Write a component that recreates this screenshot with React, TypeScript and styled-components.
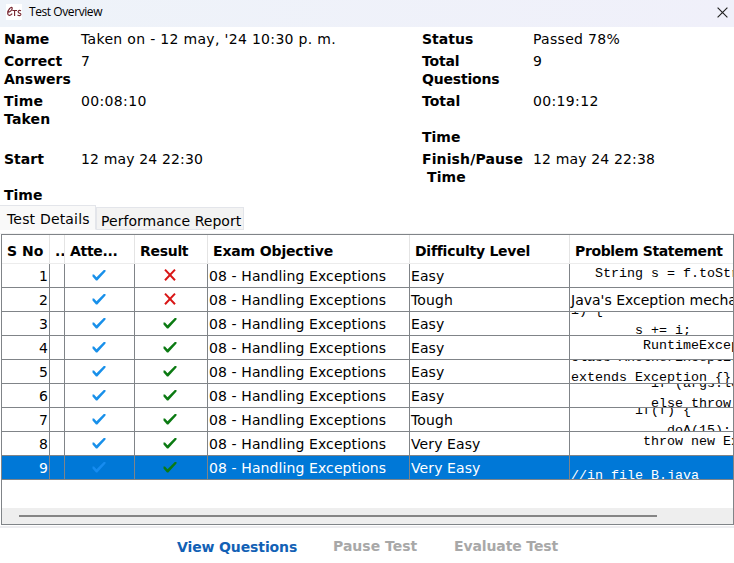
import React from 'react';
import styled, { createGlobalStyle } from 'styled-components';

const Global = createGlobalStyle`
  * { box-sizing: border-box; }
  body { margin: 0; overflow: hidden; background: #fff; }
`;

const Window = styled.div`
  width: 734px;
  height: 563px;
  display: flex;
  flex-direction: column;
  background: #fff;
  color: #000;
  font: 14px/18px 'DejaVu Sans', Verdana, sans-serif;
  overflow: hidden;
`;
const TitleBar = styled.header`
  height: 27px;
  flex: none;
  display: flex;
  align-items: center;
  padding: 0 6px 3px 6px;
  background: linear-gradient(90deg, #eef3f9, #f0f0fa);
`;
const Title = styled.span`
  flex: 1;
  margin-left: 7px;
  font: 12px/16px 'Open Sans', 'Noto Sans', sans-serif;
  letter-spacing: -0.42px;
`;
const Text = styled.span<{ $track?: number }>`
  letter-spacing: ${(p) => p.$track ?? 0}px;
  white-space: pre;
`;
const Info = styled.section`
  flex: none;
  display: grid;
  grid-template-columns: 77px 341px 111px 1fr;
  grid-template-rows: 18px 36px 54px 54px;
  row-gap: 4px;
  height: 179px;
  padding: 3px 0 0 4px;
`;
const Label = styled(Text)`
  font-weight: bold;
`;
const Tabs = styled.nav`
  flex: none;
  height: 28px;
  display: flex;
  align-items: flex-end;
  padding-bottom: 3px;
  border-bottom: 1px solid #f3f3f3;
`;
const Tab = styled.div<{ $active?: boolean; $w: number }>`
  width: ${(p) => p.$w}px;
  height: ${(p) => (p.$active ? 25 : 23)}px;
  padding: ${(p) => (p.$active ? '4px 0 0 7px' : '4px 0 0 4px')};
  background: ${(p) => (p.$active ? '#f9f9f9' : '#f3f3f3')};
  border: 1px solid #e3e5ea;
  border-bottom-color: ${(p) => (p.$active ? '#f9f9f9' : '#e3e5ea')};
  border-left-width: ${(p) => (p.$active ? 0 : 1)}px;
`;
const TablePane = styled.main`
  flex: none;
  width: 733px;
  height: 291px;
  margin-left: 1px;
  border: 1px solid #808488;
  display: flex;
  flex-direction: column;
`;
const columns = '48px 15px 70px 73px 202px 160px 1fr';
const HeaderRow = styled.div`
  flex: none;
  height: 29px;
  display: grid;
  grid-template-columns: ${columns};
  border-bottom: 1px solid #ececec;
`;
const HeadCell = styled.div`
  padding: 7px 0 0 5px;
  border-right: 1px solid #e4e4e4;
  font-weight: bold;
  overflow: hidden;
  &:last-child { border-right: 0; }
`;
const Row = styled.div<{ $selected?: boolean }>`
  flex: none;
  height: 24px;
  display: grid;
  grid-template-columns: ${columns};
  color: ${(p) => (p.$selected ? '#fff' : '#000')};
  background: ${(p) => (p.$selected ? '#0078d7' : '#fff')};
`;
const Cell = styled.div<{ $align?: string }>`
  height: 24px;
  padding: 3px 1px 0;
  text-align: ${(p) => p.$align ?? 'left'};
  border-right: 1px solid #808488;
  border-bottom: 1px solid #808488;
  overflow: hidden;
  &:last-child { border-right: 0; }
`;
const IconCell = styled(Cell)`
  padding: 3px 2px 0 0;
  display: flex;
  justify-content: center;
`;
const CodeCell = styled(Cell)`
  padding: 0 0 0 1px;
`;
const Code = styled.pre<{ $shift: number }>`
  margin: ${(p) => p.$shift}px 0 0;
  font: 13.333px/20px 'Liberation Mono', 'Courier New', monospace;
`;
const ScrollTrack = styled.div`
  margin-top: auto;
  height: 16px;
  padding: 7px 76px 0 17px;
  background: #eee;
`;
const ScrollThumb = styled.div`
  height: 2px;
  background: #858585;
`;
const Footer = styled.footer`
  flex: 1;
  margin-top: 1px;
  border-top: 2px solid #ededf0;
  padding: 9px 0 0 177px;
  display: flex;
  font-weight: bold;
`;
const Action = styled.button<{ $w: number; $primary?: boolean }>`
  width: ${(p) => p.$w}px;
  height: 18px;
  padding: 0;
  border: 0;
  background: none;
  text-align: left;
  font: inherit;
  margin-top: ${(p) => (p.$primary ? 1 : 0)}px;
  color: ${(p) => (p.$primary ? '#1261b5' : '#a8a8a8')};
`;

const Logo = () => (
  <svg width="16" height="16" viewBox="0 0 16 16" fill="none" stroke="#74222c">
    <rect width="16" height="16" fill="#fff" stroke="none" />
    <path d="M1.2 8.3C4 8.4 6.6 5.8 6.2 3.9C5.3 2 1.6 6.2 1.7 9.2C1.8 12.3 4.3 11.7 6.2 9.6" strokeWidth="1.2" />
    <path d="M6.3 6.5H11M8.6 6.5V12M15 6.8C12.7 5.7 11.2 7.3 12.7 8.7C14 9.6 15.4 9.7 14.7 11C14 11.8 12.6 11.7 11.5 11" strokeWidth="1.1" />
  </svg>
);
const Close = () => (
  <svg width="11" height="11" viewBox="0 0 11 11" stroke="#222" strokeWidth="1.15">
    <path d="M.6.6L10.4 10.4M10.4.6L.6 10.4" />
  </svg>
);
const Check = ({ color }: { color: string }) => (
  <svg width="14" height="16" viewBox="0 0 14 16" fill={color}>
    <path d="M0.5 7.5H2L4.5 10.2L11.8 3H13.5V4.5L5.3 13.5H4L0.5 9.5Z" />
  </svg>
);
const Cross = () => (
  <svg width="12" height="16" viewBox="0 0 12 16" fill="none" stroke="#d91616" strokeWidth="2">
    <path d="M1 2.6L11 13.2M11 2.6L1 13.2" />
  </svg>
);

type Entry = { level: string; failed?: boolean; code?: string; shift?: number; text?: string };
const entries: Entry[] = [
  { level: 'Easy', failed: true, code: '   String s = f.toString();', shift: 0 },
  { level: 'Tough', failed: true, text: "Java's Exception mechanism" },
  { level: 'Easy', code: 'i) {\n        s += i;', shift: -11 },
  { level: 'Easy', code: '         RuntimeException', shift: 0 },
  { level: 'Easy', code: 'class AnotherException\nextends Exception {}', shift: -12 },
  { level: 'Easy', code: '          if (args.length\n          else throw', shift: -10 },
  { level: 'Tough', code: '        if(f) {\n            doA(15);', shift: -7 },
  { level: 'Very Easy', code: '         throw new Exception', shift: 0 },
  { level: 'Very Easy', code: '//in file B.java', shift: 10 },
];

export default function App() {
  return (
    <>
      <Global />
      <Window>
        <TitleBar>
          <Logo />
          <Title>Test Overview</Title>
          <Close />
        </TitleBar>
        <Info>
          <Label>Name</Label>
          <Text $track={0.32}>Taken on - 12 may, '24 10:30 p. m.</Text>
          <Label>Status</Label>
          <Text $track={0.3}>Passed 78%</Text>
          <Label>{'Correct\nAnswers'}</Label>
          <Text>7</Text>
          <Label $track={-0.2}>{'Total\nQuestions'}</Label>
          <Text>9</Text>
          <Label $track={0.15}>{'Time\nTaken'}</Label>
          <Text $track={0.35}>00:08:10</Text>
          <Label>{'Total\n\nTime'}</Label>
          <Text $track={0.35}>00:19:12</Text>
          <Label>{'Start\n\nTime'}</Label>
          <Text $track={0.15}>12 may 24 22:30</Text>
          <Label $track={0.12}>{'Finish/Pause\n Time'}</Label>
          <Text $track={0.15}>12 may 24 22:38</Text>
        </Info>
        <Tabs>
          <Tab $active $w={96}><Text $track={0.18}>Test Details</Text></Tab>
          <Tab $w={148}><Text $track={0.04}>Performance Report</Text></Tab>
        </Tabs>
        <TablePane>
          <HeaderRow>
            <HeadCell><Text>S No</Text></HeadCell>
            <HeadCell><Text>..</Text></HeadCell>
            <HeadCell><Text $track={-0.3}>Atte...</Text></HeadCell>
            <HeadCell><Text $track={-0.3}>Result</Text></HeadCell>
            <HeadCell><Text $track={-0.15}>Exam Objective</Text></HeadCell>
            <HeadCell><Text $track={-0.25}>Difficulty Level</Text></HeadCell>
            <HeadCell><Text $track={-0.36}>Problem Statement</Text></HeadCell>
          </HeaderRow>
          {entries.map((e, i) => {
            const selected = i === entries.length - 1;
            return (
              <Row key={i} $selected={selected}>
                <Cell $align="right">{i + 1}</Cell>
                <Cell />
                <IconCell><Check color={selected ? '#168cf0' : '#1890ea'} /></IconCell>
                <IconCell>{e.failed ? <Cross /> : <Check color="#0b7a12" />}</IconCell>
                <Cell><Text $track={0.1}>08 - Handling Exceptions</Text></Cell>
                <Cell><Text $track={0.1}>{e.level}</Text></Cell>
                {e.text ? (
                  <Cell><Text>{e.text}</Text></Cell>
                ) : (
                  <CodeCell><Code $shift={e.shift ?? 0}>{e.code}</Code></CodeCell>
                )}
              </Row>
            );
          })}
          <ScrollTrack><ScrollThumb /></ScrollTrack>
        </TablePane>
        <Footer>
          <Action $w={156} $primary><Text $track={-0.12}>View Questions</Text></Action>
          <Action $w={121}><Text>Pause Test</Text></Action>
          <Action $w={120}><Text $track={-0.12}>Evaluate Test</Text></Action>
        </Footer>
      </Window>
    </>
  );
}
